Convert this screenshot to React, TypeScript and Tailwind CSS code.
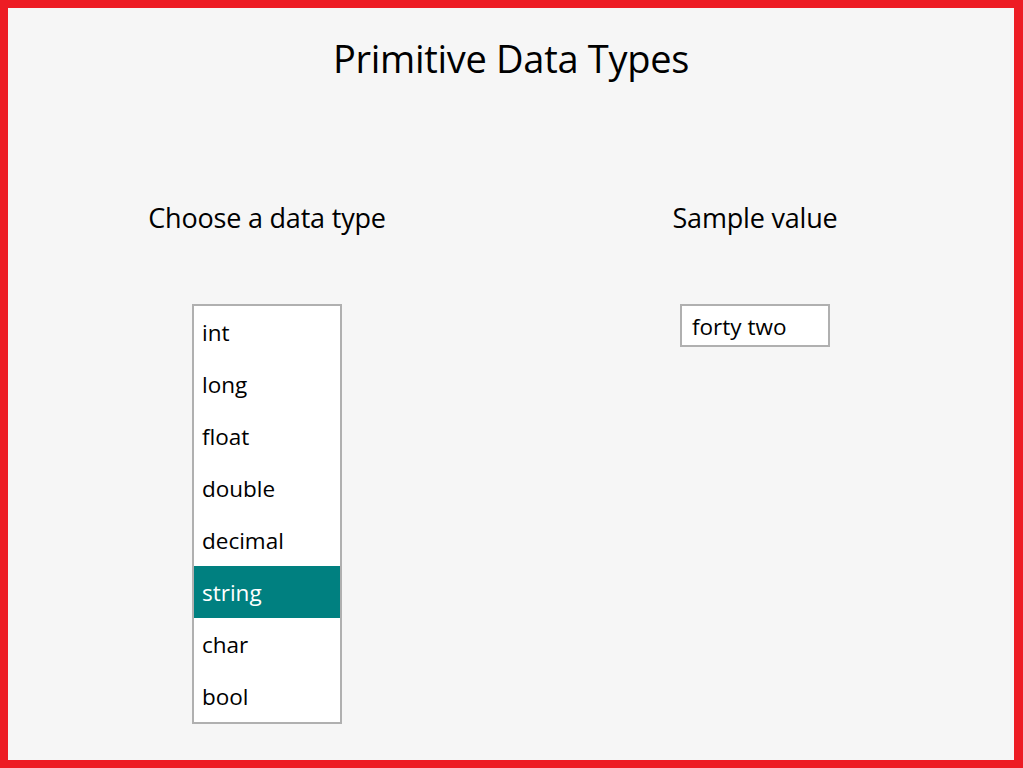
import { useState } from "react";

const types = ["int", "long", "float", "double", "decimal", "string", "char", "bool"];

const samples: Record<string, string> = {
  int: "42",
  long: "42L",
  float: "0.42F",
  double: "0.42",
  decimal: "0.42M",
  string: "forty two",
  char: "x",
  bool: "true",
};

export default function App() {
  const [selected, setSelected] = useState("string");

  return (
    <div
      className="h-[768px] w-[1023px] border-t-8 border-l-8 border-b-8 border-r-[9px] border-[#ed1c24] bg-[#f6f6f6] text-black"
      style={{ fontFamily: '"Open Sans", "Noto Sans", sans-serif' }}
    >
      <h1 className="pt-[30px] text-center text-[38px] leading-[40px] tracking-[-0.3px]">Primitive Data Types</h1>

      <div className="mt-[123px] flex">
        {/* Left column: list of types */}
        <div className="flex w-[518px] flex-col items-center">
          <div className="text-[27px] leading-[34px] tracking-[-0.2px]">Choose a data type</div>
          <ul className="mt-[69px] w-[150px] border-2 border-[#b0b0b0] bg-white">
            {types.map((t) => (
              <li
                key={t}
                onClick={() => setSelected(t)}
                className={
                  t === selected
                    ? "flex h-[52px] cursor-default items-center bg-[#008080] pl-2 pt-[2px] text-[22.5px] text-white"
                    : "flex h-[52px] cursor-default items-center pl-2 pt-[2px] text-[22.5px] text-black"
                }
              >
                {t}
              </li>
            ))}
          </ul>
        </div>

        {/* Right column: sample value */}
        <div className="flex w-[458px] flex-col items-center">
          <div className="text-[27px] leading-[34px] tracking-[-0.2px]">Sample value</div>
          <div className="mt-[69px] flex h-[43px] w-[150px] items-center border-2 border-[#b0b0b0] bg-white pl-[10px] pt-[2px] text-[22.5px]">
            {samples[selected]}
          </div>
        </div>
      </div>
    </div>
  );
}
